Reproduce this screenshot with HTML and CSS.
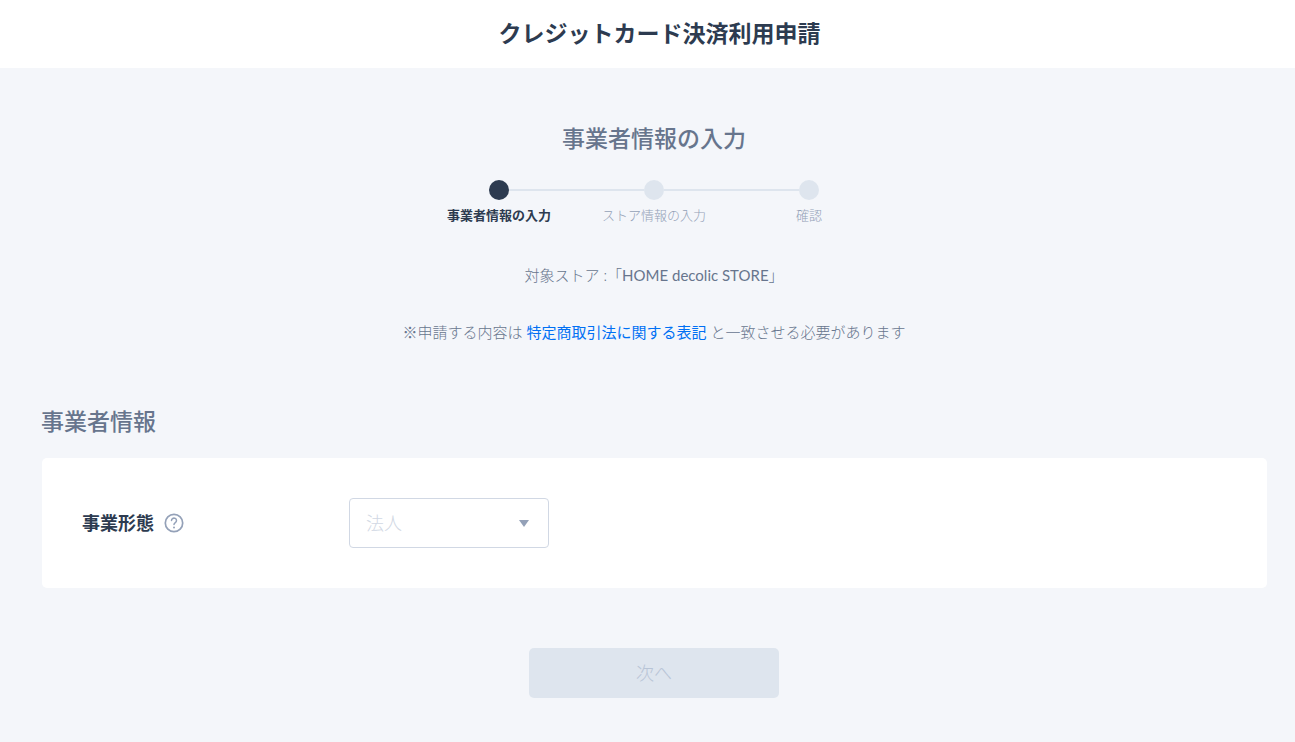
FILE: index.html
```html
<!DOCTYPE html>
<html lang="ja">
<head>
    <meta charset="UTF-8">
    <meta name="viewport" content="width=device-width, initial-scale=1.0">
    <title>クレジットカード決済利用申請</title>
    <link rel="stylesheet" href="styles.css">
</head>
<body>
    <header class="header">
        <h1>クレジットカード決済利用申請</h1>
    </header>

    <main class="container">
        <h2 class="page-title">事業者情報の入力</h2>

        <!-- Progress -->
        <ol class="steps">
            <li class="step current">事業者情報の入力</li>
            <li class="step">ストア情報の入力</li>
            <li class="step">確認</li>
        </ol>

        <p class="note">対象ストア :「<span class="store-name">HOME decolic STORE</span>」</p>
        <p class="note">※申請する内容は <a href="#">特定商取引法に関する表記</a> と一致させる必要があります</p>

        <form>
            <h2 class="section-title">事業者情報</h2>
            <div class="card">
                <div class="card-label">
                    <label for="business-type">事業形態</label>
                    <button type="button" class="help" aria-label="ヘルプ">
                        <svg width="20" height="20" viewBox="0 0 20 20" fill="none" stroke="currentColor" stroke-linecap="round">
                            <circle cx="10" cy="10" r="8.7" stroke-width="1.7"/>
                            <path d="M7.5 7.6a2.5 2.4 0 1 1 3.8 2c-.9.6-1.3 1-1.3 2" stroke-width="1.5"/>
                            <circle cx="10" cy="14.4" r="1" fill="currentColor" stroke="none"/>
                        </svg>
                    </button>
                </div>
                <div class="select-box">
                    <select id="business-type" name="business_type" disabled>
                        <option>法人</option>
                    </select>
                </div>
            </div>

            <button type="submit" class="next" disabled>次へ</button>
        </form>
    </main>
</body>
</html>
```
FILE: styles.css
```css
* {
    box-sizing: border-box;
}
body {
    margin: 0;
    background-color: #f4f6fa;
    color: #67758d;
    font-family: Lato, "Noto Sans CJK JP", sans-serif;
    font-size: 15px;
    font-weight: 300;
    line-height: 24px;
}
h1, h2 {
    margin: 0;
    font-size: 23px;
    font-weight: 500;
    line-height: 32px;
}
.header {
    padding: 17px 0 19px 24px;
    background-color: #fff;
    color: #2d3b50;
    text-align: center;
}
.header h1 {
    font-weight: 700;
}
.container {
    padding: 54px 28px 44px 41px;
}
.page-title {
    text-align: center;
}
.steps {
    display: flex;
    justify-content: center;
    margin: 26px 0 38px;
    padding: 0;
    list-style: none;
}
.step {
    position: relative;
    width: 155px;
    color: #93a1b7;
    font-size: 13px;
    line-height: 20px;
    text-align: center;
}
.step::before {
    content: "";
    display: block;
    width: 20px;
    height: 20px;
    margin: 0 auto 5px;
    border-radius: 50%;
    background-color: #dee5ee;
}
/* line to the previous step */
.step + .step::after {
    content: "";
    position: absolute;
    top: 9px;
    right: calc(50% + 10px);
    width: calc(100% - 20px);
    height: 2px;
    background-color: #dee5ee;
}
.step.current {
    color: #2d3b50;
    font-weight: 700;
}
.step.current::before {
    background-color: #2d3b50;
}
.note {
    margin: 0 0 33px;
    text-align: center;
}
.note a {
    color: #0070f4;
    font-weight: 400;
    text-decoration: none;
}
.store-name {
    font-weight: 400;
}
.section-title {
    margin: 61px 0 21px;
}
.card {
    display: flex;
    align-items: center;
    margin-left: 1px;
    padding: 40px;
    border-radius: 5px;
    background-color: #fff;
}
.card-label {
    display: flex;
    align-items: center;
    gap: 10px;
    width: 267px;
    color: #2d3b50;
    font-size: 18px;
    font-weight: 700;
}
.help {
    display: flex;
    padding: 0;
    border: 0;
    background: none;
    color: #94a1b8;
    cursor: pointer;
}
.select-box {
    position: relative;
}
.select-box::after {
    content: "";
    position: absolute;
    top: 22px;
    right: 20px;
    border: 5px solid transparent;
    border-top: 7px solid #94a1b8;
    border-bottom: 0;
    pointer-events: none;
}
select {
    display: block;
    width: 200px;
    height: 50px;
    padding: 0 16px;
    border: 1px solid #d1d8e4;
    border-radius: 4px;
    background-color: #fff;
    color: #d1d8e4;
    font: inherit;
    font-size: 18px;
    opacity: 1;
    appearance: none;
}
.next {
    display: block;
    width: 250px;
    height: 50px;
    margin: 60px auto 0;
    border: 0;
    border-radius: 5px;
    background-color: #dee5ee;
    color: #b8c4d6;
    font: inherit;
    font-size: 18px;
}
```
